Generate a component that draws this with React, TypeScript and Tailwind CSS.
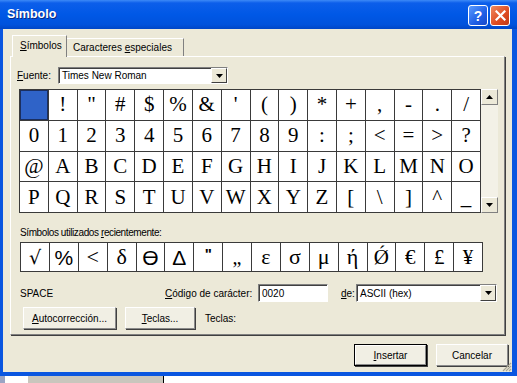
import React from "react";

const sans = "font-['Liberation_Sans',Arial,sans-serif]";
const serif = "font-['Liberation_Serif','Times_New_Roman',serif]";

// caracteres 0x20..0x5F
const cells = Array.from({ length: 64 }, (_, i) => String.fromCharCode(32 + i));

const recent = [
  { ch: "√", cls: "font-['DejaVu_Serif',serif] text-[19px]" },
  { ch: "%", cls: "font-['Liberation_Sans',sans-serif] text-[21px]" },
  { ch: "<", cls: "font-['Liberation_Serif',serif] text-[22px]" },
  { ch: "δ", cls: "font-['Liberation_Serif',serif] text-[22px]" },
  { ch: "Ɵ", cls: "font-['Liberation_Sans',sans-serif] text-[21px]" },
  { ch: "Δ", cls: "font-['Liberation_Sans',sans-serif] text-[21px]" },
  { ch: "\"", cls: "font-['Liberation_Sans',sans-serif] font-bold text-[15px] -mt-[8px]" },
  { ch: "„", cls: "font-['Liberation_Serif',serif] text-[20px]" },
  { ch: "ε", cls: "font-['Liberation_Serif',serif] text-[22px]" },
  { ch: "σ", cls: "font-['Liberation_Serif',serif] text-[22px]" },
  { ch: "μ", cls: "font-['Liberation_Serif',serif] text-[22px]" },
  { ch: "ή", cls: "font-['Liberation_Serif',serif] text-[22px]" },
  { ch: "Ǿ", cls: "font-['Liberation_Serif',serif] text-[21px]" },
  { ch: "€", cls: "font-['Liberation_Serif',serif] text-[21px]" },
  { ch: "£", cls: "font-['Liberation_Serif',serif] text-[21px]" },
  { ch: "¥", cls: "font-['Liberation_Serif',serif] text-[21px]" },
];

function Arrow({ up = false }: { up?: boolean }) {
  return (
    <svg width="7" height="4" viewBox="0 0 7 4">
      <path d={up ? "M3.5 0 L7 4 L0 4 Z" : "M0 0 L7 0 L3.5 4 Z"} fill="#000" />
    </svg>
  );
}

function DropButton() {
  return (
    <div className="w-[16px] h-full bg-[#ece9d8] border border-t-white border-l-white border-b-[#404040] border-r-[#404040] flex items-center justify-center">
      <Arrow />
    </div>
  );
}

function Button({
  children,
  w,
  def = false,
}: {
  children: React.ReactNode;
  w: string;
  def?: boolean;
}) {
  return (
    <div
      className={`${w} h-[22px] ${def ? "border border-black" : ""} shadow-[1px_1px_0_#404040]`}
    >
      <div className="h-full bg-[#f1efe4] border border-t-white border-l-white border-b-[#8a8a8a] border-r-[#8a8a8a] flex items-center justify-center text-[10px]">
        {children}
      </div>
    </div>
  );
}

export default function App() {
  return (
    <div className={`w-[517px] h-[383px] overflow-hidden bg-white text-black ${sans}`}>
      {/* ventana */}
      <div className="h-[376px] flex flex-col bg-[#0a56e0]">
        <div className="h-[29px] shrink-0 flex items-center pl-[7px] pr-[7px] bg-[linear-gradient(to_bottom,#3d8af7_0px,#0c5eea_3px,#0058e6_50%,#0052dc_85%,#0046c6_100%)]">
          <span className="text-white font-bold text-[12.5px] [text-shadow:1px_1px_0_#0a2a80]">
            Símbolo
          </span>
          <div className="ml-auto flex gap-[2px] pt-[2px]">
            <div className="w-[20px] h-[21px] rounded-[3px] border border-white bg-[linear-gradient(135deg,#5a9bff,#1f5fe6_60%,#1848c8)] flex items-center justify-center text-white font-bold text-[14px] leading-none">
              ?
            </div>
            <div className="w-[20px] h-[21px] rounded-[3px] border border-white bg-[linear-gradient(135deg,#f08a60,#dd4a20_60%,#c23a16)] flex items-center justify-center">
              <svg width="11" height="11" viewBox="0 0 11 11">
                <path d="M1.5 1.5 L9.5 9.5 M9.5 1.5 L1.5 9.5" stroke="#fff" strokeWidth="2.2" strokeLinecap="square" />
              </svg>
            </div>
          </div>
        </div>

        {/* área cliente */}
        <div className="relative flex-1 min-h-0 ml-[3px] mr-[5px] mb-[4px] bg-[#ece9d8] pl-[7px] pt-[6px] flex flex-col text-[10px]">
          {/* pestañas */}
          <div className="h-[22px] shrink-0 flex items-end -mb-px relative z-10">
            <div className="ml-[2px] w-[55px] h-[22px] bg-[#ece9d8] border-t border-l border-r border-t-white border-l-white border-r-[#808080] flex items-center pl-[7px] pb-[2px]">
              <span>
                <u>S</u>ímbolos
              </span>
            </div>
            <div className="w-[117px] h-[18px] border-t border-r border-t-white border-r-[#808080] flex items-center pl-[6px] mb-px">
              <span>
                Caracteres <u>e</u>speciales
              </span>
            </div>
          </div>

          {/* panel */}
          <div className="w-[495px] h-[279px] shrink-0 border border-t-white border-l-white border-b-[#808080] border-r-[#808080] shadow-[1px_1px_0_#404040] pl-[8px] flex flex-col">
            <div className="mt-[10px] ml-[-2px] h-[17px] flex items-center">
              <span className="w-[41px]">
                <u>F</u>uente:
              </span>
              <div className="w-[170px] h-full bg-white border border-t-[#808080] border-l-[#808080] border-b-white border-r-white shadow-[inset_1px_1px_0_#404040] flex items-center">
                <span className="pl-[3px] flex-1">Times New Roman</span>
                <DropButton />
              </div>
            </div>

            <div className="mt-[5px] flex">
              <div className="grid grid-cols-[repeat(16,minmax(0,1fr))] grid-rows-[repeat(4,minmax(0,1fr))] gap-px bg-[#3a3a3a] border border-[#3a3a3a] w-[462px] h-[124px]">
                {cells.map((ch, i) => (
                  <div
                    key={i}
                    className={`flex items-center justify-center ${serif} text-[21px] leading-none ${
                      i === 0 ? "bg-[#2f63c8] shadow-[inset_0_0_0_1px_#1b2f60]" : "bg-white"
                    }`}
                  >
                    {ch === " " ? "" : ch}
                  </div>
                ))}
              </div>
              <div className="w-[17px] h-[124px] flex flex-col bg-[#f3f1e7]">
                <div className="h-[16px] bg-[#ece9d8] border border-t-white border-l-white border-b-[#808080] border-r-[#808080] flex items-center justify-center">
                  <Arrow up />
                </div>
                <div className="flex-1" />
                <div className="h-[16px] bg-[#ece9d8] border border-t-white border-l-white border-b-[#808080] border-r-[#808080] flex items-center justify-center">
                  <Arrow />
                </div>
              </div>
            </div>

            <div className="mt-[11px] ml-[1px] h-[16px] flex items-center">
              <span className="tracking-[-0.4px]">
                Símbolos utilizados <u>r</u>ecientemente:
              </span>
            </div>

            <div className="mt-[2px] ml-[1px] grid grid-cols-[repeat(16,minmax(0,1fr))] gap-px bg-[#3a3a3a] border border-[#3a3a3a] w-[463px] h-[30px]">
              {recent.map((r, i) => (
                <div key={i} className="bg-white flex items-center justify-center leading-none">
                  <span className={r.cls}>{r.ch}</span>
                </div>
              ))}
            </div>

            <div className="mt-[12px] ml-[1px] h-[18px] flex items-center">
              <span className="w-[145px]">SPACE</span>
              <span className="w-[93px]">
                <u>C</u>ódigo de carácter:
              </span>
              <div className="w-[70px] h-full bg-white border border-t-[#808080] border-l-[#808080] border-b-white border-r-white shadow-[inset_1px_1px_0_#404040] flex items-center pl-[3px]">
                0020
              </div>
              <span className="ml-[13px] w-[15px]">
                <u>d</u>e:
              </span>
              <div className="w-[141px] h-full bg-white border border-t-[#808080] border-l-[#808080] border-b-white border-r-white shadow-[inset_1px_1px_0_#404040] flex items-center">
                <span className="pl-[3px] flex-1">ASCII (hex)</span>
                <DropButton />
              </div>
            </div>

            <div className="mt-[5px] ml-[4px] h-[22px] flex items-center">
              <Button w="w-[93px]">
                <span>
                  <u>A</u>utocorrección...
                </span>
              </Button>
              <div className="ml-[9px]">
                <Button w="w-[70px]">
                  <span>
                    <u>T</u>eclas...
                  </span>
                </Button>
              </div>
              <span className="ml-[10px]">Teclas:</span>
            </div>
          </div>

          {/* botones inferiores */}
          <div className="mt-[9px] shrink-0 flex justify-end pr-[4px] gap-[9px]">
            <Button w="w-[73px]" def>
              <span>
                <u>I</u>nsertar
              </span>
            </Button>
            <Button w="w-[72px]">Cancelar</Button>
          </div>

          {/* agarre de redimensión */}
          <svg className="absolute right-0 bottom-0" width="11" height="11" viewBox="0 0 11 11">
            <path d="M10 2 L2 10 M10 5 L5 10 M10 8 L8 10" stroke="#a8a594" strokeWidth="1.2" />
          </svg>
        </div>
      </div>

      {/* ventana de detrás */}
      <div className="h-[7px] flex">
        <div className="w-[5px] bg-[#9aa4c4]" />
        <div className="w-[23px] bg-white" />
        <div className="w-[135px] bg-[#c9c6bd]" />
        <div className="w-px bg-black" />
        <div className="flex-1 bg-white" />
      </div>
    </div>
  );
}
